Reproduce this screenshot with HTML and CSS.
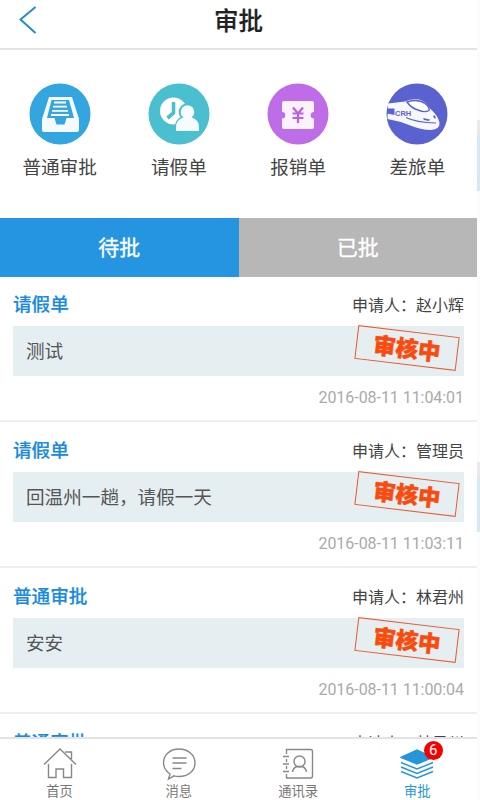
FILE: index.html
```html
<!DOCTYPE html>
<html lang="zh-CN">
<head>
<meta charset="utf-8">
<title>审批</title>
<link rel="stylesheet" href="styles.css">
</head>
<body>
<div class="app">
  <header class="header">
    <svg class="back" width="18" height="28" viewBox="0 0 18 28"><path d="M16.500 1 1.500 13.500l15 13.500"/></svg>
    <h1>审批</h1>
  </header>
  <nav class="shortcuts">
    <div class="shortcut">
      <svg width="62" height="62" viewBox="0 0 62 62"><circle cx="31" cy="31" r="30.500" fill="#33a5df"/><path fill="#f4fafe" fill-rule="evenodd" d="M20 14h23l7 22v11q0 2-2 2H15q-2 0-2-2V36zM22.500 17 18 35h7.500l2 6.500h8l2-6.500H45l-5-18z"/><path d="M25 19.500h12M24 23.700h14M23 27.900h16M22 32h18" stroke="#fff" stroke-width="1.800"/></svg>
      <span>普通审批</span>
    </div>
    <div class="shortcut">
      <svg width="62" height="62" viewBox="0 0 62 62"><circle cx="31" cy="31" r="30.500" fill="#49bfcf"/><circle cx="25.500" cy="28" r="13.500" fill="#fff"/><path d="M25.500 19v11l-6 5" fill="none" stroke="#49bfcf" stroke-width="3.600"/><g stroke="#49bfcf" stroke-width="4" stroke-linejoin="round" fill="#49bfcf"><path d="M29 48v-4q0-6 5-8.500l3-1.500v-2h6v2l3 1.500q5 2.500 5 8.500v4z"/><circle cx="39.500" cy="29" r="6.800"/></g><g fill="#f4fcfd"><path d="M28 48v-4q0-6 5-8.500l3-1.500v-2h7v2l3 1.500q5 2.500 5 8.500v4z"/><circle cx="39.500" cy="29" r="6.800"/></g></svg>
      <span>请假单</span>
    </div>
    <div class="shortcut">
      <svg width="62" height="62" viewBox="0 0 62 62"><circle cx="31" cy="31" r="30.500" fill="#be6ce7"/><path fill="#fbf2fe" d="M17 18h28q2 0 2 2v9a3.300 3.300 0 0 0 0 6.600V44q0 2-2 2H17q-2 0-2-2v-8.400a3.300 3.300 0 0 0 0-6.600v-9q0-2 2-2z"/><path d="m26 24.500 5 6 5-6M31 30v10M25.500 30.500h11M25.500 35h11" fill="none" stroke="#b961e5" stroke-width="2.200"/></svg>
      <span>报销单</span>
    </div>
    <div class="shortcut">
      <svg width="62" height="62" viewBox="0 0 62 62"><circle cx="31" cy="31" r="30.500" fill="#5a62cf"/><path fill="#f6f7ff" d="M2 20.500 19 18.500Q25 15.500 33 16.500q7 2 11 9 8 7 9.500 14 .5 7-8.500 7.500-10 0-22-5Q13 38 1.500 36z"/><path d="M21 19q4 6 11 8 7 3 11 .5 1-3-4-7-7-5-18-1.500z" fill="#fff" stroke="#5a62cf" stroke-width="1.400"/><path d="M1 25.500h7.500V32L1 30.500z" fill="#5a62cf"/><path d="M20 34.500q10 5 30 5.500" fill="none" stroke="#5a62cf" stroke-width="1.200"/><path d="m37 35 7 1.500-1 1.500-5-1zM47 32.500l2 0 1 3-2-.5z" fill="#5a62cf"/><text x="9" y="33" class="train-text">CRH</text></svg>
      <span>差旅单</span>
    </div>
  </nav>
  <div class="tabs"><div class="tab active">待批</div><div class="tab">已批</div></div>
  <main class="list">
    <article class="item">
      <div class="top"><h2>请假单</h2><span>申请人：赵小辉</span></div>
      <div class="content">测试<div class="stamp"><b>审核中</b></div></div>
      <time>2016-08-11 11:04:01</time>
    </article>
    <article class="item">
      <div class="top"><h2>请假单</h2><span>申请人：管理员</span></div>
      <div class="content">回温州一趟，请假一天<div class="stamp"><b>审核中</b></div></div>
      <time>2016-08-11 11:03:11</time>
    </article>
    <article class="item">
      <div class="top"><h2>普通审批</h2><span>申请人：林君州</span></div>
      <div class="content">安安<div class="stamp"><b>审核中</b></div></div>
      <time>2016-08-11 11:00:04</time>
    </article>
    <article class="item">
      <div class="top"><h2>普通审批</h2><span>申请人：林君州</span></div>
    </article>
  </main>
  <footer class="bottom">
    <div class="nav"><svg width="34" height="34" viewBox="0 0 34 34"><path d="M1 17.500 17 2l16 15.500M5.500 17v13.500h7.500V22h7.500v8.500h8V17M22 5h6.500v7"/></svg><span>首页</span></div>
    <div class="nav"><svg width="34" height="34" viewBox="0 0 34 34"><path d="M8 27Q1.500 22.500 1.500 16C1.500 8 8 2 17 2s16 6 16 14-7 13.500-16 13.500q-3 0-5-.7L6.500 32zM10.500 11h14M10.500 16h14M10.500 21.500h9"/></svg><span>消息</span></div>
    <div class="nav"><svg width="34" height="34" viewBox="0 0 34 34"><path d="M5.500 7V2.500h24q2 0 2 2V29q0 2-2 2h-24V27M5.500 12v3M5.500 19v3M2 9.500h6M2 17h6M2 24.500h6"/><circle cx="18.500" cy="14.500" r="5.500"/><path d="M11.500 25q1-5 5-5.500h4q4 .5 5 5.500"/></svg><span>通讯录</span></div>
    <div class="nav current"><svg width="34" height="34" viewBox="0 0 34 34"><path class="solid" d="m1 10.500 16-7.500 16 7.500-16 6.500z"/><path d="m1 15.500 16 6.500 16-6.500M1 20l16 6.500 16-6.500M1 24.500l16 6.500 16-6.500"/></svg><i class="badge">6</i><span>审批</span></div>
  </footer>
</div>
<aside class="edge"><i class="e1"></i><i class="e2"></i></aside>
</body>
</html>
```
FILE: styles.css
```css
* { box-sizing: border-box; }
body { margin: 0; width: 480px; height: 800px; overflow: hidden; display: flex; background: #fff; color: #444; font-family: Roboto, "Noto Sans CJK SC", sans-serif; }
svg { display: block; flex: none; }
.app { width: 477px; height: 800px; display: flex; flex-direction: column; }
.header { height: 50px; flex: none; border-bottom: 2px solid #e3e3e3; position: relative; }
.back { position: absolute; left: 19px; top: 6px; fill: none; stroke: #238bd0; stroke-width: 2; }
h1 { margin: 0; text-align: center; font-size: 24.5px; line-height: 43px; font-weight: 500; color: #222; -webkit-text-stroke: .2px #222; }
.shortcuts { height: 168px; flex: none; display: grid; grid-template-columns: repeat(4, 1fr); padding-top: 33px; }
.shortcut { display: flex; flex-direction: column; align-items: center; font-size: 18.6px; line-height: 28px; gap: 9px; }
.train-text { font: bold 7.5px "Liberation Sans", sans-serif; fill: #5a62cf; }
.tabs { height: 59px; flex: none; display: flex; }
.tab { flex: 1; background: #b7b7b7; color: #fff; text-align: center; font-size: 21px; line-height: 61px; -webkit-text-stroke: .3px #fff; }
.tab.active { background: #2695e1; }
.list { flex: 1; min-height: 0; overflow: hidden; }
.item { height: 146px; padding: 12px 13px 0; border-bottom: 2px solid #eee; margin-top: -1px; }
.item + .item { margin-top: 0; }
.top { height: 38px; display: flex; justify-content: space-between; font-size: 16px; line-height: 36px; }
h2 { margin: 0; font-size: 18.6px; line-height: 34px; color: #188be0; font-weight: 500; -webkit-text-stroke: .2px #188be0; }
.content { height: 50px; background: #e5eff2; padding-left: 13px; font-size: 18.6px; line-height: 52px; position: relative; color: #555; }
.stamp { position: absolute; right: 6px; top: 5px; width: 102px; height: 34px; border: 1.5px solid #ef582d; transform: rotate(6.800deg); text-align: center; }
.stamp b { display: block; color: #fa4a0c; font-size: 22.5px; line-height: 35px; font-weight: 900; -webkit-text-stroke: .5px #fa4a0c; }
time { display: block; text-align: right; color: #aaa; font-size: 16px; line-height: 44px; letter-spacing: -.05px; }
.bottom { height: 63px; flex: none; border-top: 2px solid #e3e3e3; display: flex; background: #fff; }
.nav { flex: 1; position: relative; display: flex; flex-direction: column; align-items: center; padding-top: 8px; font-size: 13.3px; line-height: 22px; color: #777; }
.nav svg { fill: none; stroke: #888; stroke-width: 1.4; }
.nav.current { color: #2695da; }
.nav.current svg { stroke: #2695da; }
.current .solid { fill: #2695da; }
.badge { position: absolute; left: 66px; top: 2px; width: 19px; height: 19px; border-radius: 50%; background: #f30000; color: #fff; font-style: normal; font-size: 15px; line-height: 18px; text-align: center; }
.edge { width: 3px; display: flex; flex-direction: column; background: #fafcfe; }
.edge i { background: #d4e9f8; border-top: 15px solid #e9e9e9; }
.e1 { height: 71px; margin-top: 120px; }
.e2 { height: 70px; margin-top: 271px; }
```
